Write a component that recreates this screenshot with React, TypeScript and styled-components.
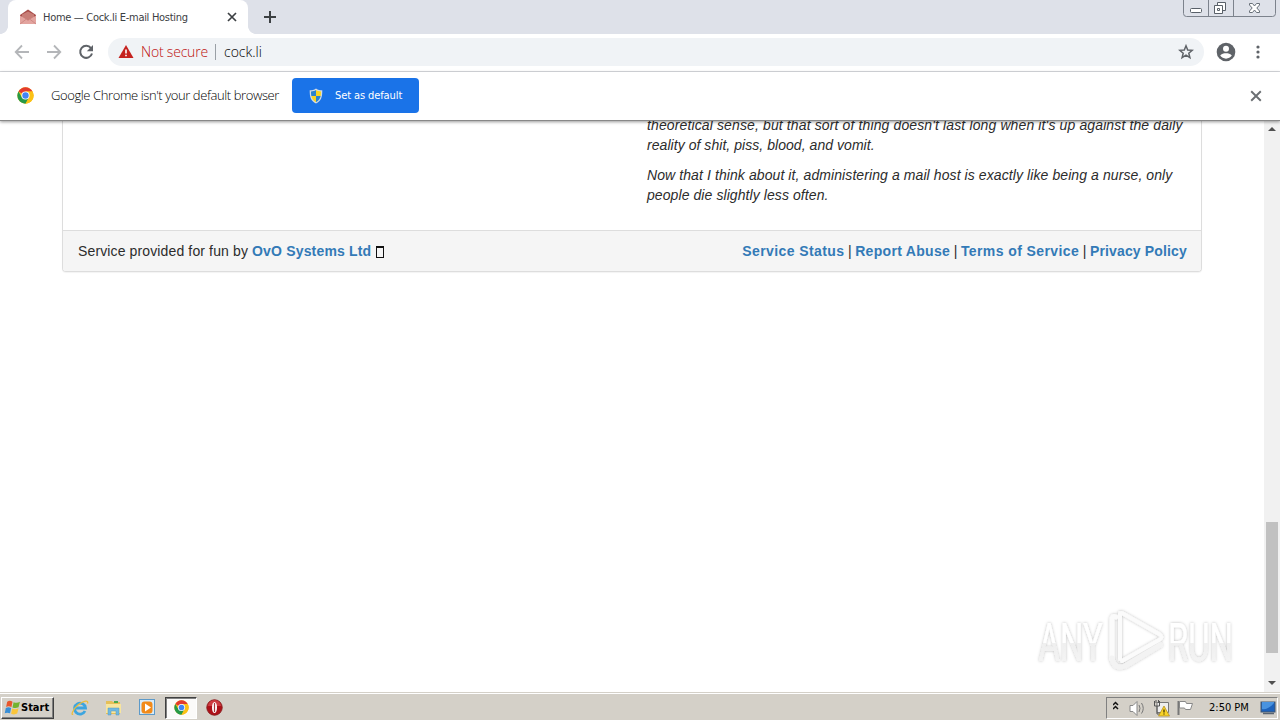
import React from "react";
import styled, { createGlobalStyle } from "styled-components";

const Global = createGlobalStyle`
  * { box-sizing: border-box; }
  body { margin: 0; background: #fff; overflow: hidden; }
  svg { display: block; flex: none; }
`;

const Screen = styled.div`
  width: 1280px;
  height: 720px;
  display: flex;
  flex-direction: column;
  overflow: hidden;
  background: #fff;
`;

const UiText = styled.span<{ $size: number; $color?: string; $spacing?: number; $family?: string }>`
  font-family: ${(p) => p.$family ?? '"Open Sans"'}, Tahoma, sans-serif;
  font-weight: ${(p) => (p.$family ? 400 : 300)};
  font-size: ${(p) => p.$size}px;
  letter-spacing: ${(p) => p.$spacing ?? 0}px;
  color: ${(p) => p.$color ?? "#3c4043"};
  line-height: 18px;
  white-space: nowrap;
`;

const TabStrip = styled.header`
  height: 34px;
  flex: none;
  display: flex;
  background: #dee1e9;
  padding-right: 4px;
`;

const TabEdge = styled.div<{ $side: "left" | "right" }>`
  width: 8px;
  height: 34px;
  background: radial-gradient(circle at ${(p) => (p.$side === "left" ? "0" : "100%")} 0, #dee1e9 7.6px, #fff 8.2px) 0 26px / 8px 8px no-repeat;
`;

const Tab = styled.div`
  width: 240px;
  height: 34px;
  padding: 0 11px 0 12px;
  display: flex;
  align-items: center;
  border-radius: 8px 8px 0 0;
  background: #fff;
`;

const TabTitle = styled(UiText)`
  flex: 1;
  margin: 1px 0 0 7px;
`;

const NewTab = styled.div`
  padding: 11px 0 0 8px;
  flex: 1;
`;

const Toolbar = styled.div`
  height: 38px;
  flex: none;
  display: flex;
  align-items: center;
  padding: 0 8px 1px 14px;
  border-bottom: 1px solid #dadce0;
`;

const NavButtons = styled.div`
  display: flex;
  gap: 16px;
  width: 94px;
`;

const Omnibox = styled.div`
  width: 1096px;
  height: 28px;
  border-radius: 14px;
  background: #f0f3f6;
  display: flex;
  align-items: center;
  padding: 0 10px;
`;

const SecurityLabel = styled(UiText)`
  width: 67px;
  margin-left: 7px;
`;

const Divider = styled.span`
  width: 1px;
  height: 16px;
  margin: 0 8px 0 7px;
  background: #9aa0a6;
`;

const Spacer = styled.div`
  flex: 1;
`;

const ToolbarActions = styled.div`
  display: flex;
  align-items: center;
  gap: 12px;
  margin-left: 12px;
`;

const InfoBar = styled.div`
  position: relative;
  height: 49px;
  flex: none;
  display: flex;
  align-items: center;
  padding: 0 18px 1px 17px;
  background: #fff;
  border-bottom: 1px solid #888;
  box-shadow: 0 1px 3px rgba(0, 0, 0, 0.4);
  z-index: 1;
`;

const InfoMessage = styled(UiText)`
  width: 241px;
  margin: 0 0 2px 17px;
`;

const DefaultButton = styled.button`
  width: 127px;
  height: 35px;
  border: 0;
  padding: 0 0 0 17px;
  border-radius: 4px;
  background: #1a73e8;
  display: flex;
  align-items: center;
  gap: 12px;
`;

const Viewport = styled.main`
  flex: 1;
  min-height: 0;
  display: flex;
`;

const Page = styled.div`
  position: relative;
  flex: 1;
  padding: 0 62px;
  overflow: hidden;
  font: 14px/20px "Liberation Sans", Arial, sans-serif;
  color: #2c2c2c;
`;

const Panel = styled.section`
  height: 151px;
  width: 1140px;
  border: 1px solid #ddd;
  border-top: 0;
  border-radius: 0 0 4px 4px;
  box-shadow: 0 1px 1px rgba(0, 0, 0, 0.05);
  display: flex;
  flex-direction: column;
  justify-content: flex-end;
`;

const Story = styled.div`
  padding: 0 0 15px 584px;
  font-style: italic;
`;

const Paragraph = styled.p`
  margin: 0 0 10px;
`;

const Line = styled.span<{ $spacing: number }>`
  display: block;
  white-space: nowrap;
  letter-spacing: ${(p) => p.$spacing}px;
`;

const PanelFooter = styled.footer`
  height: 41px;
  flex: none;
  display: flex;
  align-items: center;
  justify-content: space-between;
  padding: 0 14px 0 15px;
  background: #f5f5f5;
  border-top: 1px solid #ddd;
  border-radius: 0 0 3px 3px;
  white-space: nowrap;
`;

const FooterGroup = styled.div`
  display: flex;
  align-items: center;
`;

const FooterText = styled.span<{ $spacing?: number }>`
  letter-spacing: ${(p) => p.$spacing ?? 0.13}px;
  white-space: pre;
`;

const Link = styled.a<{ $spacing?: number }>`
  font-weight: bold;
  color: #337ab7;
  letter-spacing: ${(p) => p.$spacing ?? 0.4}px;
`;

const MissingGlyph = styled.span`
  width: 8px;
  height: 12px;
  margin: 2px 0 0 5px;
  border: 1px solid #111;
  border-top-width: 2px;
`;

const Watermark = styled.div`
  position: absolute;
  left: 1030px;
  top: 481px;
`;

const Scrollbar = styled.div`
  width: 16px;
  display: flex;
  flex-direction: column;
  align-items: center;
  padding: 6px 0 7px;
  background: #f1f1f1;
`;

const Thumb = styled.div`
  width: 12px;
  height: 131px;
  margin: 391px 0 auto;
  background: #c1c1c1;
`;

const ScrollArrow = styled.div<{ $up?: boolean }>`
  border: 4px solid transparent;
  border-top: ${(p) => (p.$up ? "0" : "4px solid #505050")};
  border-bottom: ${(p) => (p.$up ? "4px solid #505050" : "0")};
`;

const Taskbar = styled.nav`
  height: 28px;
  flex: none;
  display: flex;
  align-items: center;
  padding: 2px 2px 0 1px;
  background: #d4d0c8;
  border-top: 1px solid #d4d0c8;
  box-shadow: inset 0 1px 0 #fff;
`;

const StartButton = styled.div`
  width: 53px;
  height: 22px;
  display: flex;
  align-items: center;
  padding-left: 2px;
  margin-right: 9px;
  border: 1px solid;
  border-color: #fff #404040 #404040 #fff;
  box-shadow: inset -1px -1px 0 #808080;
`;

const StartLabel = styled(UiText)`
  font-weight: bold;
`;

const QuickLaunch = styled.div<{ $active?: boolean; $width: number }>`
  width: ${(p) => p.$width}px;
  height: 22px;
  display: flex;
  align-items: center;
  justify-content: center;
  ${(p) =>
    p.$active &&
    `background: #fbfaf9; border: 1px solid; border-color: #404040 #fff #fff #404040; box-shadow: inset 1px 1px 0 #808080;`}
`;

const Tray = styled.div`
  width: 172px;
  height: 22px;
  display: flex;
  align-items: center;
  padding: 0 0 0 6px;
  border: 1px solid;
  border-color: #808080 #fff #fff #808080;
`;

const Clock = styled(UiText)`
  flex: 1;
  margin-left: 16px;
`;

const CONDENSED = '"DejaVu Sans Condensed"';

const ChromeLogo = ({ size }: { size: number }) => (
  <svg width={size} height={size} viewBox="0 0 48 48">
    <circle cx="24" cy="24" r="23" fill="#fbc116" />
    <path d="M24 24 4.1 12.5A23 23 0 0 1 43.9 12.5H24z" fill="#e33b2e" />
    <path d="M4.1 12.5A23 23 0 0 0 24 47l10-17.5L24 24 14 29.8z" fill="#269947" />
    <path d="M43.9 12.5H24l10 17.3L24 47A23 23 0 0 0 43.9 12.5z" fill="#fbc116" />
    <circle cx="24" cy="24" r="11.5" fill="#fff" />
    <circle cx="24" cy="24" r="9" fill="#4285f4" />
  </svg>
);

const Cross = ({ size, color, width }: { size: number; color: string; width: number }) => (
  <svg width={size} height={size} viewBox="0 0 10 10" stroke={color} strokeWidth={width}>
    <path d="M1 1l8 8M9 1l-8 8" />
  </svg>
);

const MailIcon = () => (
  <svg width="16" height="16" viewBox="0 0 16 16">
    <path d="M0 6l8-5.5L16 6v9H0z" fill="#a84d49" />
    <path d="M2 5.5l6-3 6 3v4l-6 2-6-2z" fill="#c87d76" />
    <path d="M0 6.5l8 5 8-5V15H0z" fill="#e3a49f" />
    <path d="M0 15l6.4-5M16 15l-6.4-5" stroke="#c9837e" strokeWidth=".8" />
  </svg>
);

const Arrow = ({ back }: { back?: boolean }) => (
  <svg width="16" height="16" viewBox="0 0 16 16" fill="none" stroke="#b4b6b9" strokeWidth="1.8">
    <path d={back ? "M15 8H2M8 1.5L1.7 8 8 14.5" : "M1 8h13M8 1.5L14.3 8 8 14.5"} />
  </svg>
);

const Reload = () => (
  <svg width="16" height="16" viewBox="0 0 16 16">
    <path d="M13 4.2A6 6 0 1 0 14 9.5" fill="none" stroke="#5f6368" strokeWidth="2" />
    <path d="M15 1v6.2H8.8z" fill="#5f6368" />
  </svg>
);

const Warning = () => (
  <svg width="16" height="14" viewBox="0 0 16 14">
    <path d="M8 0l7.5 13H.5z" fill="#c5221f" />
    <path d="M7.2 4.5h1.6v4H7.2zM7.2 9.7h1.6v1.6H7.2z" fill="#fff" />
  </svg>
);

const Star = () => (
  <svg width="16" height="16" viewBox="0 0 16 16" fill="none" stroke="#5f6368" strokeWidth="1.5">
    <path d="M8 1.8l1.7 4.2 4.6.3-3.5 2.9 1.1 4.4L8 11.2l-3.9 2.4 1.1-4.4L1.7 6.3 6.3 6z" />
  </svg>
);

const Avatar = () => (
  <svg width="20" height="20" viewBox="0 0 20 20">
    <circle cx="10" cy="10" r="9.3" fill="#5f6368" />
    <circle cx="10" cy="6.8" r="3" fill="#fff" />
    <path d="M4.2 13.6c1-2 3.8-2.4 5.8-2.4s4.8.4 5.8 2.4a7 7 0 0 1-11.6 0z" fill="#fff" />
  </svg>
);

const Dots = () => (
  <svg width="20" height="16" viewBox="0 0 20 16" fill="#5f6368">
    <circle cx="10" cy="3" r="1.6" />
    <circle cx="10" cy="8" r="1.6" />
    <circle cx="10" cy="13" r="1.6" />
  </svg>
);

const Shield = () => (
  <svg width="14" height="16" viewBox="0 0 14 16">
    <path d="M7 .5C5 2 3 2.3.7 2.3c0 7 1 10.5 6.3 13.2 5.3-2.7 6.3-6.2 6.3-13.2C11 2.3 9 2 7 .5z" fill="#d4dce4" />
    <path d="M7 2C5.5 3 4 3.4 2 3.5 2 5 2 6.5 2.3 8H7z" fill="#2b83cf" />
    <path d="M7 2c1.5 1 3 1.4 5 1.5 0 1.5 0 3-.3 4.5H7z" fill="#f9d423" />
    <path d="M2.3 8C3 11 4.5 12.8 7 14.2V8z" fill="#f9d423" />
    <path d="M11.7 8c-.7 3-2.2 4.8-4.7 6.2V8z" fill="#2b83cf" />
  </svg>
);

const WindowControls = () => (
  <svg width="93" height="18" viewBox="0 0 93 18" fill="none">
    <path d="M.5 0v13.5q0 3 3 3h86q3 0 3-3V0M25.5 0v16M50.5 0v16" stroke="#7c828c" />
    <rect x="7.5" y="8.5" width="11" height="4" rx="1" fill="#fff" stroke="#596069" />
    <path d="M34.5 5V2.5h8v8H40" stroke="#596069" fill="#fff" />
    <path d="M31.5 5.5h8v8h-8zM34.5 8.5h2v2h-2z" stroke="#596069" fill="#fff" />
    <path d="M66.5 3.5h3l2 2.500 2-2.500h3v1.500L73.800 8l2.700 3v1.500h-3l-2-2.500-2 2.500h-3V11l2.700-3-2.700-3z" fill="#fff" stroke="#687079" />
  </svg>
);

const AnyRunMark = () => (
  <svg width="212" height="72" viewBox="0 0 212 72">
    <defs>
      <linearGradient id="fade" gradientUnits="userSpaceOnUse" x1="0" y1="-38" x2="0" y2="0">
        <stop offset=".52" stopColor="#fff" />
        <stop offset=".54" stopColor="#efefef" />
        <stop offset="1" stopColor="#f4f4f4" />
      </linearGradient>
      <filter id="halo" x="-10%" y="-20%" width="120%" height="140%">
        <feDropShadow dx="0" dy="0" stdDeviation="1.8" floodColor="#000" floodOpacity=".27" />
      </filter>
    </defs>
    <g filter="url(#halo)" fill="url(#fade)" fontFamily="Roboto, sans-serif" fontSize="53" fontWeight="400">
      <text transform="translate(8.5 59) scale(.62 1)">ANY</text>
      <text transform="translate(138 59) scale(.62 1)">RUN</text>
      <g fill="none" stroke="#fbfbfb" strokeWidth="5" strokeLinejoin="round" strokeLinecap="round">
        <path d="M82 57V18q0-5 4-3" />
        <path d="M90 11v46M92 11l37 21q5 3 0 6L92 59" strokeWidth="4" />
        <path d="M82 56q2 12 13 8l35-21" stroke="#f3f3f3" />
      </g>
    </g>
  </svg>
);

const WindowsFlag = () => (
  <svg width="17" height="17" viewBox="0 0 16 16">
    <path d="M3 2.5c2-1.2 3.5-.8 5 0L7 7.5c-2-.8-3.5-.8-5 0z" fill="#e8562b" />
    <path d="M9 3c2 .8 4 .8 6-.3l-1.3 5c-2 1-3.7 1-5.7.2z" fill="#73b32f" />
    <path d="M1.7 8.5c2-1.2 3.5-.8 5 0l-1 5c-2-.8-3.5-.8-5 0z" fill="#388ed6" />
    <path d="M7.7 9c2 .8 4 .8 6-.3l-1.3 5c-2 1-3.7 1-5.7.2z" fill="#fac53a" />
  </svg>
);

const ExplorerE = () => (
  <svg width="18" height="18" viewBox="0 0 18 18" fill="none">
    <path d="M14 12A5.5 5.5 0 1 1 14.5 9H5" stroke="#3da5df" strokeWidth="2.8" />
    <path d="M2 15C0 17 1 11 7 6s11-5 9.5-1.5" stroke="#edbd3a" strokeWidth="1.3" />
  </svg>
);

const Folder = () => (
  <svg width="17" height="17" viewBox="0 0 17 17">
    <path d="M1 4V2h6l1 1h7v12H1z" fill="#e5bf58" />
    <path d="M1 5h15v9H1z" fill="#f8e59d" />
    <path d="M3 9h11v7h-3v-4H6v4H3z" fill="#70b8e1" stroke="#5799bd" strokeWidth=".5" />
    <path d="M9 3h4" stroke="#4aa84d" strokeWidth="2" />
  </svg>
);

const MediaPlayer = () => (
  <svg width="17" height="17" viewBox="0 0 17 17">
    <rect x=".5" y=".5" width="15" height="15" fill="#d8ebf8" stroke="#5d9ac9" />
    <rect x="2.5" y="2.5" width="11" height="12" rx="3" fill="#f28a19" />
    <path d="M6 4.5v8l6-4z" fill="#fff" />
  </svg>
);

const OperaIcon = () => (
  <svg width="17" height="17" viewBox="0 0 17 17">
    <circle cx="8.5" cy="8.5" r="7.7" fill="#ad1018" stroke="#8a1a1c" />
    <path d="M2 7a6.5 6 0 0 1 13 0z" fill="#dc5053" opacity=".7" />
    <ellipse cx="8.5" cy="8.5" rx="2.5" ry="5.5" fill="#fff" />
    <path d="M8.5 4v9" stroke="#a8363a" strokeWidth="1.2" />
  </svg>
);

const TrayIcons = () => (
  <svg width="80" height="18" viewBox="0 0 80 18" fill="none">
    <path d="M0 6l2.5-2.5L5 6M0 10l2.5-2.5L5 10" stroke="#111" strokeWidth="1.5" />
    <path d="M17 6.5h3l4-4v14l-4-4h-3z" fill="#fff" stroke="#888" />
    <path d="M26 6q2 3 0 7M28.5 4q3.5 5.5 0 10.5" stroke="#777" />
    <path d="M44 3.5h11.5v10H44z" fill="#eee" stroke="#777" />
    <path d="M41.5 2v5h5V2M44 7v8h4M43 1v3M45.5 1v3" stroke="#555" />
    <path d="M51 7l5.5 10h-11z" fill="#f8d328" stroke="#ae861a" strokeWidth=".7" />
    <path d="M51 10.5v3M51 14.5v1" stroke="#332400" strokeWidth="1.2" />
    <path d="M65.5 2v14" stroke="#777" strokeWidth="2" />
    <path d="M66.5 2.5h6l1 2h6l-2 6h-5l-1-1.5h-5z" fill="#fff" stroke="#888" />
  </svg>
);

const DesktopIcon = () => (
  <svg width="17" height="16" viewBox="0 0 17 16">
    <rect x="1" y="2" width="14" height="10" fill="#1d62bb" stroke="#42566f" />
    <path d="M2 9C6 10 11 7 14 3V2H2z" fill="#4993df" />
    <path d="M3 13.5h11" stroke="#5a6470" strokeWidth="1.5" />
  </svg>
);

export default function App() {
  return (
    <Screen>
      <Global />
      <TabStrip>
        <TabEdge $side="left" />
        <Tab>
          <MailIcon />
          <TabTitle $size={11} $family={CONDENSED} $spacing={-0.3}>Home — Cock.li E-mail Hosting</TabTitle>
          <Cross size={10} color="#3c4043" width={1.7} />
        </Tab>
        <TabEdge $side="right" />
        <NewTab>
          <svg width="12" height="12" stroke="#3c4043" strokeWidth="2"><path d="M6 0v12M0 6h12" /></svg>
        </NewTab>
        <WindowControls />
      </TabStrip>
      <Toolbar>
        <NavButtons>
          <Arrow back />
          <Arrow />
          <Reload />
        </NavButtons>
        <Omnibox>
          <Warning />
          <SecurityLabel $size={14} $color="#bd0f0c" $spacing={-0.2}>Not secure</SecurityLabel>
          <Divider />
          <UiText $size={14} $color="#000">cock.li</UiText>
          <Spacer />
          <Star />
        </Omnibox>
        <ToolbarActions>
          <Avatar />
          <Dots />
        </ToolbarActions>
      </Toolbar>
      <InfoBar>
        <ChromeLogo size={17} />
        <InfoMessage $size={13} $color="#000" $spacing={-0.4}>Google Chrome isn't your default browser</InfoMessage>
        <DefaultButton>
          <Shield />
          <UiText $size={11} $color="#fff" $family={CONDENSED} $spacing={-0.1}>Set as default</UiText>
        </DefaultButton>
        <Spacer />
        <Cross size={12} color="#6b6f73" width={1.6} />
      </InfoBar>
      <Viewport>
        <Page>
          <Panel>
            <Story>
              <Paragraph>
                <Line $spacing={0.125}>theoretical sense, but that sort of thing doesn't last long when it's up against the daily</Line>
                <Line $spacing={0.05}>reality of shit, piss, blood, and vomit.</Line>
              </Paragraph>
              <Paragraph>
                <Line $spacing={0.09}>Now that I think about it, administering a mail host is exactly like being a nurse, only</Line>
                <Line $spacing={0.08}>people die slightly less often.</Line>
              </Paragraph>
            </Story>
            <PanelFooter>
              <FooterGroup>
                <FooterText>Service provided for fun by </FooterText>
                <Link $spacing={0.17}>OvO Systems Ltd</Link>
                <MissingGlyph />
              </FooterGroup>
              <FooterGroup>
                <Link>Service Status</Link>
                <FooterText $spacing={-0.2}> | </FooterText>
                <Link $spacing={0.3}>Report Abuse</Link>
                <FooterText $spacing={-0.2}> | </FooterText>
                <Link>Terms of Service</Link>
                <FooterText $spacing={-0.2}> | </FooterText>
                <Link $spacing={0.15}>Privacy Policy</Link>
              </FooterGroup>
            </PanelFooter>
          </Panel>
          <Watermark><AnyRunMark /></Watermark>
        </Page>
        <Scrollbar>
          <ScrollArrow $up />
          <Thumb />
          <ScrollArrow />
        </Scrollbar>
      </Viewport>
      <Taskbar>
        <StartButton>
          <WindowsFlag />
          <StartLabel $size={11} $color="#000" $family={CONDENSED}>Start</StartLabel>
        </StartButton>
        <QuickLaunch $width={34}><ExplorerE /></QuickLaunch>
        <QuickLaunch $width={33}><Folder /></QuickLaunch>
        <QuickLaunch $width={35}><MediaPlayer /></QuickLaunch>
        <QuickLaunch $width={32} $active><ChromeLogo size={15} /></QuickLaunch>
        <QuickLaunch $width={34}><OperaIcon /></QuickLaunch>
        <Spacer />
        <Tray>
          <TrayIcons />
          <Clock $size={11} $color="#000" $family={CONDENSED}>2:50 PM</Clock>
          <DesktopIcon />
        </Tray>
      </Taskbar>
    </Screen>
  );
}
